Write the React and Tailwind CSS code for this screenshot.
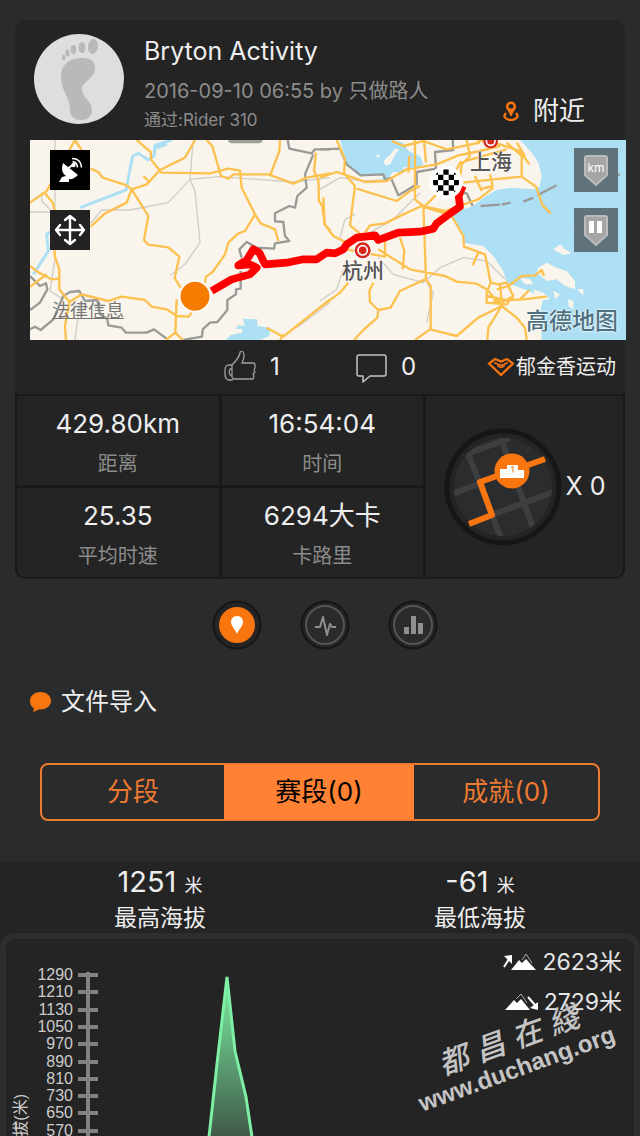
import { useState } from 'react'

const stats = [
  { label: '距离', value: '429.80km' },
  { label: '时间', value: '16:54:04' },
  { label: '平均时速', value: '25.35' },
  { label: '卡路里', value: '6294大卡' }
]

// y positions of the elevation axis ticks
const ticks = [
  { label: 1290, y: 36 },
  { label: 1210, y: 53 },
  { label: 1130, y: 71 },
  { label: 1050, y: 88 },
  { label: 970, y: 105 },
  { label: 890, y: 123 },
  { label: 810, y: 140 },
  { label: 730, y: 157 },
  { label: 650, y: 174 },
  { label: 570, y: 192 }
]

function Avatar() {
  return (
    <svg viewBox="0 0 90 90" className="size-[90px] shrink-0">
      <circle cx="45" cy="45" r="45" fill="#dedede" />
      <g fill="#b9b9b9">
        <path d="M27 43c0-14 10-19 22-19 8 0 12 4 12 10 0 10-13 14-13 21 0 9 10 12 10 21 0 6-4 10-11 10-8 0-11-4-11-11 0-12-9-18-9-32z" />
        <ellipse cx="59" cy="12.500" rx="5" ry="7.500" transform="rotate(8 59 12.500)" />
        <ellipse cx="48" cy="13.500" rx="3.500" ry="5.500" />
        <ellipse cx="39.500" cy="15.500" rx="2.800" ry="4.500" />
        <ellipse cx="33.500" cy="19" rx="2.200" ry="3.600" />
        <ellipse cx="29.700" cy="23.500" rx="1.800" ry="2.800" />
      </g>
    </svg>
  )
}

function MapDrawing() {
  return (
    <svg viewBox="0 0 1788 600" preserveAspectRatio="xMidYMid slice" className="block h-[200px] w-full">
      <rect width="1788" height="600" fill="#faf5ec" />
      <g fill="none" strokeLinejoin="round">
        {/* water */}
        <g fill="#aee0f5">
          <path transform="translate(870 -12)" d="M600 12L635 50L655 80L665 120L658 152L640 160L575 155L530 162L490 185L455 212L430 220L395 240L425 285L430 320L490 330L520 360L550 405L560 440L600 455L640 470L670 485L660 530L665 612H930V12Z" />
          <path transform="translate(870 -12)" d="M60 12L80 80L115 118L190 115L185 130L205 125L220 108L250 110L250 92L285 100L310 85L300 60L265 45L250 20L220 12Z" />
          <path transform="translate(-30 -12)" d="M618 612L630 598L665 590L668 580L648 578L655 568L675 570L668 548L712 550L712 570L750 575L748 600L720 612Z" />
        </g>
        <g transform="translate(870 -12)" fill="#faf5ec">
          <path d="M165 60l15-5-5 12zM190 75l20-18 15-20 12 4-14 18-12 25-14 5zM600 425l30 5 10 15-25 0zM655 395l25-15 30 15 30 10 25 30 0 25-30-10-25-20-30 5-30-25zM700 340l20-15 15 15 20 12-25 5zM745 490l15 5 0 25-15-10zM700 465l20 10-15 15zM770 460l20 0 0 18zM755 285l45 8-12 6zM640 460l30 10 20 20-40 5z" />
        </g>
        <g stroke="#aee0f5" strokeWidth="9" transform="translate(-30 -12)">
          <path d="M455 12L405 28L402 60L385 72L355 52L338 60L318 162L180 215M92 288L80 295L85 345L40 415" />
          <path d="M405 35L440 22" strokeWidth="14" />
        </g>

        {/* railways */}
        <g stroke="#cfcdc8" strokeWidth="4">
          <path transform="translate(-30 -12)" d="M518 30L510 130L525 165L540 320L495 385L452 418M510 130L445 200L330 222L245 222L212 262M510 130L595 122L820 138L930 125M105 12V215M30 228H95M65 170V195L90 220M105 370L90 465L130 490M180 500L165 612M930 500L830 575" />
          <path transform="translate(870 -12)" d="M0 160L60 125L130 135L215 130M60 305L75 250L105 235M150 290L220 250L300 170M175 365L220 415L310 440L360 395L430 365L500 375L555 430M0 495L50 460L70 400M320 440L340 470L320 560" />
        </g>

        {/* province borders */}
        <g stroke="#9a9a98" strokeWidth="7">
          <path transform="translate(-30 -12)" d="M803 12L808 38L875 52L885 40H930M880 55L855 115L860 155L832 180L825 215L808 210L765 232V256L790 258L795 300L808 315L765 322L762 338L710 335L680 318L658 340L665 365M662 405V458L648 460V475L622 492V522L592 558L570 560L548 580L546 602L490 612M30 420L60 450L78 442L82 460L60 500L30 522M30 580L45 572L62 582L100 550L130 480L150 468L178 465L195 495L232 492L240 535L262 550L265 568L305 575L318 590H380L402 580L440 608" />
          <path transform="translate(870 -12)" d="M0 40L60 38L80 85L122 118L190 115L196 130L213 126L235 178L252 168L290 145V108L348 98L345 48L400 42L398 12M420 170L440 172L458 210M482 210L540 206M545 206L572 200M610 197L640 185M652 178L710 148M775 140L840 135L900 115" />
        </g>
        <path d="M595 -10H697V4q-2 6-10 6H605q-8 0-10-6z" fill="#a09f9b" />

        {/* roads */}
        <g stroke="#fcc14f" strokeWidth="7">
          <path transform="translate(-30 -12)" d="M30 200L80 165L110 110L165 12L185 42M75 172L98 200L105 225L104 360L118 400V460L148 498L135 570L138 612M30 390L60 412L95 430L118 428M30 452L80 415M148 498L185 475L265 495L305 482L375 492L395 512L440 520L470 540L505 542L515 530M212 98L235 108L248 125L320 148L335 160L385 240L372 312L385 326L445 334L478 362L464 426L482 455M212 272L255 232L320 200L335 160L380 145L420 102L495 65L525 12M370 120L385 135M350 12L392 48L394 72L425 110L570 112L625 98L660 104L665 155L705 235L675 285L655 292L625 320L615 355L578 408L558 422L555 440M560 12L577 30L603 120L625 128L640 115H745L820 143L860 125L930 112M780 12L778 45L750 120M705 235L722 262L765 280L775 315M888 50L882 105L895 130L897 195L907 210L914 265L932 285M930 490L830 570L790 602L740 575M780 612L790 595M470 490L466 590L438 612M466 590L488 612" />
          <path transform="translate(870 -12)" d="M50 12L75 70L72 112L105 150L90 268L135 305M0 125L50 108L100 125L135 138L200 135L260 100L350 85L415 58L480 45L540 30M215 15L250 30L310 15L380 40L480 20M268 60L265 110M285 12V190L310 210L318 430M312 12L318 80M110 158L230 195L270 165L300 150M10 185L14 265L40 300L80 320M135 290L150 268L195 262L250 235L305 210L375 225L475 190L520 155M315 210L395 130L420 80L560 40M300 210L400 240M395 240L430 300L432 332L495 355L512 440L535 445L560 440L580 480L560 505L500 500L500 470L512 440M475 350L458 388M80 340L130 350L195 362V310M175 340L270 400L375 420L410 437L470 443L500 460L545 510M545 510L505 575L502 612M545 510L475 545L410 600L330 580L285 612M240 305L253 345L248 400M318 430L332 450V580M315 430L240 465L212 515L175 522L150 498L148 465L160 440M175 522L172 545L130 582L102 612M85 440L60 470L0 515M520 495L610 490L680 482M600 490L628 462M530 460L565 450L605 420L645 418L665 402L672 420M605 122L648 152L668 208L692 232M430 140L520 130L605 122V60L560 20M465 120L485 165M510 115L518 150L480 160M440 12L450 60L425 85L415 180M470 12L540 25L600 45L628 85M590 20L615 60M545 510L590 545L615 575L620 612M540 445L545 500L580 480M500 480L570 495" />
        </g>

        {/* recorded route */}
        <path
          d="M545 453L605 418L660 403L680 383L660 373L625 376L650 360L670 328L688 338L705 373L770 368L820 358H860L890 338L915 340L940 328L950 313L980 293L1035 286L1045 300L1105 278L1170 275L1210 266L1220 250L1250 228L1290 200L1286 168L1298 138"
          stroke="#f00" strokeWidth="23"
        />

        {/* cities */}
        <g transform="translate(870 -12)">
          <circle cx="512" cy="15" r="22" fill="#d8241c" />
          <circle cx="512" cy="15" r="13" stroke="#fff" strokeWidth="5" />
          <circle cx="128" cy="343" r="27" fill="#fff" />
          <circle cx="128" cy="343" r="24" fill="#d8241c" />
          <circle cx="128" cy="343" r="14" stroke="#fff" strokeWidth="5" />
        </g>
        <circle cx="495" cy="469" r="46" fill="#f57c00" stroke="#fff" strokeWidth="5" />

        {/* finish flag */}
        <circle cx="1248" cy="127" r="50" fill="#fff" />
        <clipPath id="finish"><circle cx="1248" cy="127" r="39" /></clipPath>
        <g clipPath="url(#finish)" fill="#000">
          <path d="M1208 88h16v16h-16zM1240 88h16v16h-16zM1272 88h16v16h-16zM1224 104h16v16h-16zM1256 104h16v16h-16zM1208 120h16v16h-16zM1240 120h16v16h-16zM1272 120h16v16h-16zM1224 136h16v16h-16zM1256 136h16v16h-16zM1208 152h16v16h-16zM1240 152h16v16h-16zM1272 152h16v16h-16z" />
        </g>
      </g>
    </svg>
  )
}

function RouteMap() {
  return (
    <div className="relative ml-[15px] -mr-px h-[200px] overflow-hidden">
      <MapDrawing />
      <span className="absolute left-[440px] top-2 text-[21px] leading-7 font-medium text-[#555] [text-shadow:0_0_2px_#fff,0_0_2px_#fff]">上海</span>
      <span className="absolute left-[312px] top-[117px] text-[21px] leading-7 font-medium text-[#555] [text-shadow:0_0_2px_#fff,0_0_2px_#fff]">杭州</span>
      <a href="#legal" className="absolute left-[22px] top-[159px] text-[18px] leading-6 text-[#777] underline">法律信息</a>
      <span className="absolute right-2 top-[167px] text-[23px] leading-7 font-medium text-[#4f7080] [text-shadow:0_0_2px_#fff,0_0_2px_#fff]">高德地图</span>

      <button aria-label="卫星图" className="absolute left-5 top-[10px] flex size-10 items-center justify-center bg-black">
        <svg viewBox="0 0 40 40" className="size-10" fill="#fff">
          <path d="M13 13q-3 9 3 13l-4 1-3 5h10l0-3q4 1 9-4z" />
          <path d="M17 19l7-5" stroke="#fff" strokeWidth="2" />
          <circle cx="23.500" cy="15" r="2.200" />
          <path d="M22.500 11.500q5 1 5 6M22 8.500q9 0 9.500 9" fill="none" stroke="#fff" strokeWidth="1.600" />
        </svg>
      </button>
      <button aria-label="移动地图" className="absolute left-5 top-[70px] flex size-10 items-center justify-center bg-[#222]">
        <svg viewBox="0 0 40 40" className="size-10" fill="none" stroke="#fff" strokeWidth="2.400" strokeLinecap="round" strokeLinejoin="round">
          <path d="M20 6v28M6 20h28M15 10l5-4 5 4M15 30l5 4 5-4M10 15l-4 5 4 5M30 15l4 5-4 5" />
        </svg>
      </button>
      <button className="absolute right-2 top-2 grid size-11 place-items-center bg-[#60737c]">
        <svg viewBox="0 0 44 44" className="col-start-1 row-start-1 size-11">
          <path d="M11 10q0-2 2-2h18q2 0 2 2v17L22 37 11 27z" fill="#a5a5a5" stroke="#bcbcbc" strokeWidth="2" />
        </svg>
        <span className="col-start-1 row-start-1 pb-[5px] text-[12px] leading-4 text-white">km</span>
      </button>
      <button aria-label="暂停点" className="absolute right-2 top-[68px] size-11 bg-[#60737c]">
        <svg viewBox="0 0 44 44" className="size-11">
          <path d="M11 10q0-2 2-2h18q2 0 2 2v17L22 37 11 27z" fill="#a5a5a5" stroke="#bcbcbc" strokeWidth="2" />
          <path d="M15 13h5v12h-5zM23 13h5v12h-5z" fill="#fff" />
        </svg>
      </button>
    </div>
  )
}

function SegmentBadge() {
  return (
    <svg viewBox="0 0 118 118" className="size-[118px] shrink-0">
      <circle cx="59" cy="59" r="56" fill="#242424" stroke="#161616" strokeWidth="5" />
      <circle cx="59" cy="59" r="49" fill="#2a2c2e" />
      <clipPath id="badge"><circle cx="59" cy="59" r="49" /></clipPath>
      <g clipPath="url(#badge)" stroke="#3d3e40" strokeWidth="6">
        <path d="M22 20L57 110M56 8L89 100M8 66L40 54M50 86L112 63M20 27L66 10" />
      </g>
      <path d="M25 96L48 87L36 54L101 31" fill="none" stroke="#f8750f" strokeWidth="6" strokeLinejoin="round" />
      <circle cx="68" cy="43" r="17.500" fill="#f8750f" />
      <path d="M56 41h7v-4h11v5h6v8H56z" fill="#fff" />
      <path d="M67 39.500l2-1v6" fill="none" stroke="#f8750f" />
    </svg>
  )
}

function Climb({ down, children }) {
  return (
    <div className="flex h-10 items-center justify-end gap-[5px] text-[23px] leading-8 text-[#e6e6e6]">
      <svg viewBox="0 0 34 18" className="h-[18px] w-[34px]" fill="#fff">
        {down ? (
          <>
            <path d="M0 17L9 7l3 3 4-4 9 11z" />
            <path d="M11 6l5-5 6 9" fill="none" stroke="#aaa" />
            <path d="M23 4l7 8" stroke="#fff" strokeWidth="2" />
            <path d="M33 9v8l-8-2z" />
          </>
        ) : (
          <>
            <path d="M8 17L16 7l3 3 4-4 10 11z" />
            <path d="M19 7l4-6 6 9" fill="none" stroke="#aaa" />
            <path d="M1 14l5-8" stroke="#fff" strokeWidth="2" />
            <path d="M1 3l8-1 0 9z" />
          </>
        )}
      </svg>
      <span>{children}</span>
    </div>
  )
}

function ElevationChart() {
  return (
    <svg viewBox="0 0 300 197" className="block h-[197px] w-[300px] shrink-0">
      <defs>
        <linearGradient id="fill" x1="0" y1="0" x2="0" y2="1">
          <stop offset="0" stopColor="#7df0a4" />
          <stop offset="1" stopColor="#3f5a48" />
        </linearGradient>
      </defs>
      <g fontFamily="Liberation Sans, Noto Sans CJK SC, sans-serif" fontSize="16" fill="#ccc">
        {ticks.map(t => (
          <text key={t.label} x="67" y={t.y + 5} textAnchor="end">{t.label}</text>
        ))}
        <text transform="translate(20 155) rotate(-90)" textAnchor="end">海拔(米)</text>
      </g>
      <g stroke="#828282" strokeWidth="4">
        <path d="M82 33V197" />
        {ticks.map(t => (
          <path key={t.label} d={`M72 ${t.y}H92`} />
        ))}
      </g>
      <path d="M203 197L211 125L221 37L229 110L240 158L246 197z" fill="url(#fill)" />
      <path d="M203 198L211 125L221 38L229 112L240 158L246 198" fill="none" stroke="#7df0a4" strokeWidth="3" />
    </svg>
  )
}

function App() {
  const [view, setView] = useState('map')
  const [tab, setTab] = useState('segment')

  const views = [
    { id: 'map', label: '地图', icon: <path d="M25 16c-4 0-6 3-6 6 0 4 4 7 6 12 2-5 6-8 6-12 0-3-2-6-6-6z" fill="#fff" /> },
    { id: 'pulse', label: '心率', icon: <path d="M15 27h5l3-10 4 18 3-11 2 3h4" fill="none" stroke="#8f8f8f" strokeWidth="2" strokeLinejoin="round" /> },
    { id: 'bars', label: '统计', icon: <path d="M16 27h5v7h-5zM23 16h5v18h-5zM30 23h5v11h-5z" fill="#8f8f8f" /> }
  ]

  const tabs = [
    { id: 'lap', label: '分段' },
    { id: 'segment', label: '赛段(0)' },
    { id: 'award', label: '成就(0)' }
  ]

  return (
    <div className="min-h-screen overflow-hidden bg-[#2a2b2d] pt-5 font-['Inter','Noto_Sans_CJK_SC',sans-serif] text-[#eee]">
      <div className="mx-[15px] rounded-[10px] bg-[#242424]">
        <div className="flex h-[120px] pl-[19px] pr-10">
          <div className="pt-[14px]">
            <Avatar />
          </div>
          <div className="min-w-0 flex-1 pl-5 pt-[11px]">
            <h1 className="text-[25px] leading-10">Bryton Activity</h1>
            <p className="text-[20px] leading-10 whitespace-nowrap text-[#8c8c8c]">2016-09-10 06:55 by 只做路人</p>
            <p className="text-[17px] leading-[18px] text-[#8c8c8c]">通过:Rider 310</p>
          </div>
          <button className="flex items-center gap-[14px] self-end pb-[11px] text-[26px] leading-9">
            <svg viewBox="0 0 16 20" className="h-5 w-4" fill="none" stroke="#f8750f">
              <circle cx="8" cy="5.500" r="3.800" strokeWidth="2.600" />
              <path d="M4.500 8L8 15l3.500-7z" fill="#f8750f" />
              <path d="M3 12c-4 4 1 7 5 7s9-3 5-7" strokeWidth="2.400" />
            </svg>
            附近
          </button>
        </div>

        <RouteMap />

        <div className="flex h-[54px] items-center pl-[209px] pr-[9px]">
          <button className="flex w-[131px] items-center gap-[14px] text-[24px] leading-8">
            <svg viewBox="0 0 32 32" className="size-8" fill="none" stroke="#a0a0a0" strokeWidth="1.300" strokeLinejoin="round">
              <path d="M8 26c1 2 2 2 3 2h18l1-3-1-2 2-2-1-2 1-2v-3c0-1-1-2-2-2H18c2-4 3-8 1-11-1-2-3-1-3 1-1 5-4 8-8 12zM8 14H4c-3 1-3 3-3 7s0 7 3 8h4l2-1M8 18H6c-1 2-1 5 1 7" />
            </svg>
            1
          </button>
          <button className="flex items-center gap-[14px] text-[24px] leading-8">
            <svg viewBox="0 0 32 32" className="size-8" fill="none" stroke="#c4c4c4" strokeWidth="1.500" strokeLinejoin="round">
              <path d="M4 4h25q2 0 2 2v17q0 2-2 2H15l-7 6v-6H4q-2 0-2-2V6q0-2 2-2z" />
            </svg>
            0
          </button>
          <a href="#club" className="ml-auto flex items-center gap-px text-[20px] leading-8 whitespace-nowrap">
            <svg viewBox="0 0 28 20" className="h-5 w-7" fill="none" stroke="#f8750f" strokeWidth="2.200">
              <path d="M2 6.500L14 18 26 6.500 20 2l-6 2.500L8 2z" />
              <path d="M7 6q4 0 4 3 3 3 6 0 0-3 4-3M12 7q2 3 4 0" strokeWidth="1.500" />
            </svg>
            郁金香运动
          </a>
        </div>

        <div className="flex rounded-b-[10px] border-2 border-[#191919]">
          <dl className="grid min-w-0 flex-2 grid-cols-2 gap-[3px] bg-[#191919]">
            {stats.map((s, i) => (
              <div key={s.label} className={`flex h-[89px] flex-col-reverse items-center justify-end bg-[#242424] pt-2 ${i === 2 ? 'rounded-bl-lg' : ''}`}>
                <dt className="text-[20px] leading-10 text-[#8c8c8c]">{s.label}</dt>
                <dd className="text-[26px] leading-10">{s.value}</dd>
              </div>
            ))}
          </dl>
          <div className="flex w-[200px] items-center justify-center gap-1 border-l-[3px] border-[#191919] text-[25px]">
            <SegmentBadge />
            <span className="whitespace-nowrap">X 0</span>
          </div>
        </div>
      </div>

      <div className="mt-[21px] flex justify-center gap-[38px] pl-[10px]">
        {views.map(v => (
          <button key={v.id} aria-label={v.label} onClick={() => setView(v.id)} className="size-[50px]">
            <svg viewBox="0 0 50 50" className="size-[50px]">
              <circle cx="25" cy="25" r="23.500" fill="#242424" stroke="#161616" strokeWidth="2" />
              {view === v.id
                ? <circle cx="25" cy="25" r="18" fill="#f8750f" />
                : <circle cx="25" cy="25" r="19" fill="#2a2b2d" stroke="#555" strokeWidth="2" />}
              {v.icon}
            </svg>
          </button>
        ))}
      </div>

      <div className="mt-8 flex items-center gap-[10px] pl-[30px] text-[24px] leading-10">
        <svg viewBox="0 0 21 20" className="h-5 w-[21px]" fill="#f8750f">
          <path d="M10.500 0C4 0 0 4 0 9c0 4 2 6 4 7.500L3 20l6-2.500C16 18 21 14 21 9s-4-9-10.500-9z" />
        </svg>
        文件导入
      </div>

      <div className="mx-10 mt-[41px] grid h-[58px] grid-cols-[182fr_190fr_184fr] overflow-hidden rounded-lg border-2 border-[#ee7930]">
        {tabs.map(t => (
          <button
            key={t.id}
            onClick={() => setTab(t.id)}
            className={`text-[26px] leading-9 ${tab === t.id ? 'bg-[#ff8133] text-black' : 'text-[#ee7930]'}`}
          >
            {t.label}
          </button>
        ))}
      </div>

      <div className="mt-[41px] bg-[#242424]">
        <div className="grid h-[71px] grid-cols-2 text-center">
          <div>
            <p className="text-[29px] leading-10">1251 <span className="text-[18px]">米</span></p>
            <p className="text-[23px] leading-6">最高海拔</p>
          </div>
          <div>
            <p className="text-[29px] leading-10">-61 <span className="text-[18px]">米</span></p>
            <p className="text-[23px] leading-6">最低海拔</p>
          </div>
        </div>

        <div className="relative flex justify-between rounded-t-[14px] border-6 border-b-0 border-[#2e2e2e]">
          <ElevationChart />
          <div className="pr-3 pt-[3px]">
            <Climb>2623米</Climb>
            <Climb down>2729米</Climb>
          </div>
          <div className="absolute right-5 top-[81px] -rotate-[20deg] text-[#c4c4c4]">
            <p className="flex gap-[9px] pl-8 font-['Noto_Sans_CJK_TC',sans-serif] text-[30px] leading-9 font-medium italic">
              <span>都</span><span>昌</span><span>在</span><span>綫</span>
            </p>
            <p className="font-['Liberation_Sans',sans-serif] text-[24px] leading-7 font-bold">www.duchang.org</p>
          </div>
        </div>
      </div>
    </div>
  )
}

export default App
